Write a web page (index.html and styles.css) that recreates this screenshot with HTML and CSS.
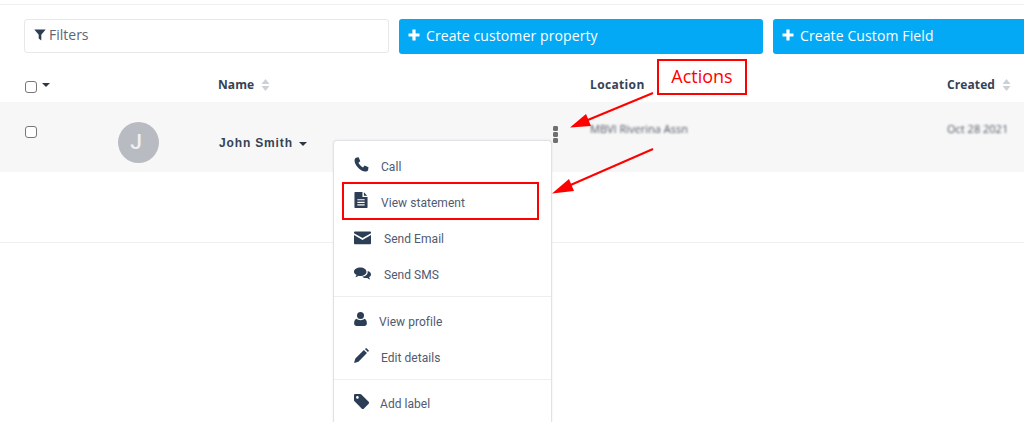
FILE: index.html
```html
<!DOCTYPE html>
<html lang="en">
<head>
<meta charset="utf-8">
<title>Customers</title>
<link rel="stylesheet" href="styles.css">
</head>
<body>
<div class="page">
  <div class="toolbar">
    <div class="filter">
      <svg class="filter-icon" viewBox="0 0 12 12"><path d="M.3.5h11.4L7.3 5.8V11.5L4.7 9.6V5.8z"/></svg>
      <span>Filters</span>
    </div>
    <button class="btn"><svg class="plus" viewBox="0 0 12 12"><path d="M4.4.5h3.2v3.9h3.9v3.2H7.6v3.9H4.4V7.6H.5V4.4h3.9z"/></svg>Create customer property</button>
    <button class="btn"><svg class="plus" viewBox="0 0 12 12"><path d="M4.4.5h3.2v3.9h3.9v3.2H7.6v3.9H4.4V7.6H.5V4.4h3.9z"/></svg>Create Custom Field</button>
  </div>

  <div class="grid head">
    <div class="head-check"><span class="check"></span><span class="caret"></span></div>
    <div></div>
    <div class="th">Name<svg class="sort" viewBox="0 0 8 12"><path d="M4 0l4 5H0zM4 12L0 7h8z"/></svg></div>
    <div class="th th-location">Location</div>
    <div class="th">Created<svg class="sort" viewBox="0 0 8 12"><path d="M4 0l4 5H0zM4 12L0 7h8z"/></svg></div>
  </div>

  <div class="grid row">
    <div class="cell-check"><span class="check"></span></div>
    <div class="avatar">J</div>
    <div class="cell-name">
      <span class="name">John Smith<span class="caret caret-name"></span></span>
      <span class="kebab"><i></i><i></i><i></i></span>
    </div>
    <div class="muted">MBVI Riverina Assn</div>
    <div class="muted">Oct 28 2021</div>
  </div>
  <div class="row-empty"></div>

  <div class="menu">
    <div class="menu-section first">
      <div class="item"><svg class="ico" viewBox="1.500 1 21 21"><path d="M4 2l4-.7 2.3 5.7-2.6 2.2c1 2.6 3.5 5 6.400 6.400l2.200-2.600 5.500 2.200-.6 4.300c-1 1.800-3.200 2.500-6.200 1.500C9 19 4 13.500 2.500 8 2 5 2.500 3 4 2z"/></svg><span class="label">Call</span></div>
      <div class="item"><svg class="ico ico-doc" viewBox="2 1 18 22"><path fill-rule="evenodd" d="M3 1h10v7h7v14a1 1 0 0 1-1 1H3a1 1 0 0 1-1-1V2a1 1 0 0 1 1-1zm12 .5L19.500 6H15zM6 11v1.500h10V11zm0 3.500V16h10v-1.500zM6 18v1.500h10V18z"/></svg><span class="label">View statement</span></div>
      <div class="item"><svg class="ico ico-wide" viewBox="0 0 28 22"><path d="M1.500 1h25A1.500 1.500 0 0 1 28 2.500V4L14 12 0 4V2.500A1.500 1.500 0 0 1 1.500 1zM0 7l14 8 14-8v13.500a1.500 1.500 0 0 1-1.500 1.500h-25A1.500 1.500 0 0 1 0 20.500z"/></svg><span class="label">Send Email</span></div>
      <div class="item"><svg class="ico ico-wide" viewBox="0 0 28 22"><path d="M10.500 1C16 1 20.500 4 20.500 8s-4.500 7-10 7c-1 0-2-.1-3-.3C6 16 4 17 2 17.300 3 16 4 14.800 4 13.200 1.500 12 0 10 0 8c0-4 4.700-7 10.500-7z"/><path d="M22.500 7c3.300 1 5.500 3 5.500 5.500 0 1.800-1.100 3.300-3 4.300 0 1.500 1 2.800 2 4.200-2-.3-3.800-1.300-5.200-2.700-3.300.6-6.500-.2-8.300-2.100 5.300-.2 10-3.400 9-9.200z"/></svg><span class="label">Send SMS</span></div>
    </div>
    <div class="menu-section second">
      <div class="item tight"><svg class="ico ico-user" viewBox="2 1 20 22"><circle cx="12" cy="6.500" r="5.500"/><path d="M6 11.500c1.500 1.500 3.500 2.300 6 2.300s4.500-.8 6-2.300c2.500.5 4 3 4 7.500 0 2.500-1.500 4-4 4H6c-2.500 0-4-1.500-4-4 0-4.500 1.500-7 4-7.500z"/></svg><span class="label">View profile</span></div>
      <div class="item"><svg class="ico" viewBox="1 1 22 22"><path d="M17 2.500l2-1.500 4 4-1.500 2zM15.500 4l4.500 4.500L7.500 21 1 23l2-6.500z"/></svg><span class="label">Edit details</span></div>
    </div>
    <div class="menu-section">
      <div class="item mid"><svg class="ico" viewBox="1 1 22 22"><path fill-rule="evenodd" d="M1 2.500A1.500 1.500 0 0 1 2.500 1H10c.7 0 1.300.3 1.800.8l10.700 10.700c.8.800.8 2 0 2.800l-7.200 7.200c-.8.800-2 .8-2.800 0L1.800 11.800C1.300 11.300 1 10.700 1 10zM6 4a2 2 0 1 0 0 4 2 2 0 0 0 0-4z"/></svg><span class="label">Add label</span></div>
    </div>
  </div>

  <div class="callout callout-actions">Actions</div>
  <div class="callout callout-item"></div>
  <svg class="arrows" viewBox="0 0 1024 422">
    <path class="arrow-line" d="M653 93 583 122"/>
    <path class="arrow-head" d="M570 127.500 586 114 591 126z"/>
    <path class="arrow-line" d="M653 149 566 187"/>
    <path class="arrow-head" d="M552 193.500 569 179 574 191z"/>
  </svg>
</div>
</body>
</html>
```
FILE: styles.css
```css
* { box-sizing: border-box; }
html, body { margin: 0; padding: 0; background: #fff; }
.page {
  position: relative;
  width: 1024px;
  height: 422px;
  overflow: hidden;
  padding-top: 4px;
  font-family: "Open Sans", sans-serif;
  color: #344257;
}
.toolbar {
  display: flex;
  gap: 10px;
  height: 49px;
  padding: 14px 0 0 24px;
  border-top: 1px solid #f0f0f0;
  align-items: flex-start;
}
.filter {
  flex: 0 0 365px;
  height: 34px;
  display: flex;
  align-items: center;
  gap: 3px;
  padding: 0 0 3px 9px;
  border: 1px solid #e8e8e8;
  border-radius: 3px;
  font-size: 14px;
  color: #5d6675;
}
.filter-icon { width: 12px; height: 12px; margin-top: 1px; fill: #2f3d52; }
.btn {
  flex: 0 0 364px;
  height: 35px;
  display: flex;
  align-items: center;
  gap: 6px;
  padding: 0 0 3px 9px;
  border: 0;
  border-radius: 3px;
  background: #03a9f4;
  color: #fff;
  font-family: "Open Sans", sans-serif;
  font-size: 14px;
  letter-spacing: .11px;
  text-align: left;
}
.plus { width: 12px; height: 12px; fill: #fff; }
.grid {
  display: grid;
  grid-template-columns: 94px 100px 372px 357px 77px;
  padding-left: 24px;
}
.head { height: 49px; padding-top: 12px; align-items: center; font-size: 12px; font-weight: 700; }
.head-check { display: flex; align-items: center; gap: 5px; padding-top: 6px; }
.th { display: flex; align-items: center; gap: 7px; padding-top: 5px; margin-top: -3px; color: #344257; letter-spacing: .1px; }
.th-location { letter-spacing: .35px; }
.sort { width: 9px; height: 12px; fill: #ccd1d7; }
.check {
  display: block;
  width: 12px;
  height: 12px;
  margin-left: 1px;
  border: 1px solid #777;
  border-radius: 3px;
  background: #fff;
}
.caret {
  display: block;
  width: 0;
  height: 0;
  border-left: 4px solid transparent;
  border-right: 4px solid transparent;
  border-top: 4px solid #2d3748;
  margin-top: -3px;
}
.row { height: 70px; background: #f7f7f7; }
.cell-check { padding-top: 24px; }
.avatar {
  width: 41px;
  height: 41px;
  margin-top: 20px;
  padding-right: 5px;
  border-radius: 50%;
  background: #b8bcc2;
  color: #f1f1f1;
  font-family: "Roboto", sans-serif;
  font-size: 21px;
  font-weight: 500;
  line-height: 41px;
  text-align: center;
}
.cell-name { display: flex; justify-content: space-between; padding-right: 32px; }
.name {
  display: flex;
  align-items: center;
  gap: 6px;
  height: 16px;
  margin: 33px 0 0 1px;
  font-family: "Liberation Sans", sans-serif;
  font-size: 12px;
  font-weight: 700;
  letter-spacing: .85px;
}
.caret-name { margin-top: 1px; }
.kebab { display: flex; flex-direction: column; gap: 1.500px; margin-top: 24px; }
.kebab i { display: block; width: 5px; height: 4.500px; border-radius: 30%; background: #6f6f6f; }
.muted {
  padding-top: 20px;
  font-size: 11px;
  line-height: 14px;
  color: #4f5563;
  filter: blur(.8px);
}
.row-empty { height: 71px; border-bottom: 1px solid #f0f0f0; }
.menu {
  position: absolute;
  left: 334px;
  top: 141px;
  width: 217px;
  height: 300px;
  background: #fff;
  border-radius: 3px;
  box-shadow: 0 0 0 1px #e2e2e6, 0 0 3px rgba(0, 0, 0, .18);
}
.menu-section { padding: 5px 0 4px 0; border-top: 1px solid #eeeef0; }
.menu-section.first { padding-top: 7px; border-top: 0; }
.menu-section.second { padding-top: 6px; }
.item {
  display: flex;
  align-items: center;
  height: 36px;
  padding-left: 20px;
  font-family: "Roboto", sans-serif;
  font-size: 12px;
  color: #505a70;
}
.ico { flex: none; width: 15px; height: 15px; margin-right: 12px; margin-top: -4px; fill: #2c3e55; }
.ico-doc { width: 14px; height: 16px; margin-right: 13px; }
.ico-user { width: 13px; height: 14px; margin-top: -5px; }
.ico-wide { width: 17px; margin-right: 13px; margin-top: -2px; }
.item.tight .ico { margin-right: 12px; }
.item.mid .ico { margin-right: 11px; }
.label { display: block; margin-top: 2px; letter-spacing: .05px; }
.callout { position: absolute; border: 2px solid #f00; }
.callout-actions {
  left: 657px;
  top: 59px;
  width: 90px;
  height: 36px;
  color: #f00;
  font-family: "Open Sans", sans-serif;
  font-size: 18px;
  line-height: 30px;
  text-align: center;
}
.callout-item { left: 342px; top: 182px; width: 197px; height: 38px; }
.arrows { position: absolute; left: 0; top: 0; width: 1024px; height: 422px; pointer-events: none; }
.arrow-line { stroke: #f00; stroke-width: 2; fill: none; }
.arrow-head { fill: #f00; }
```
